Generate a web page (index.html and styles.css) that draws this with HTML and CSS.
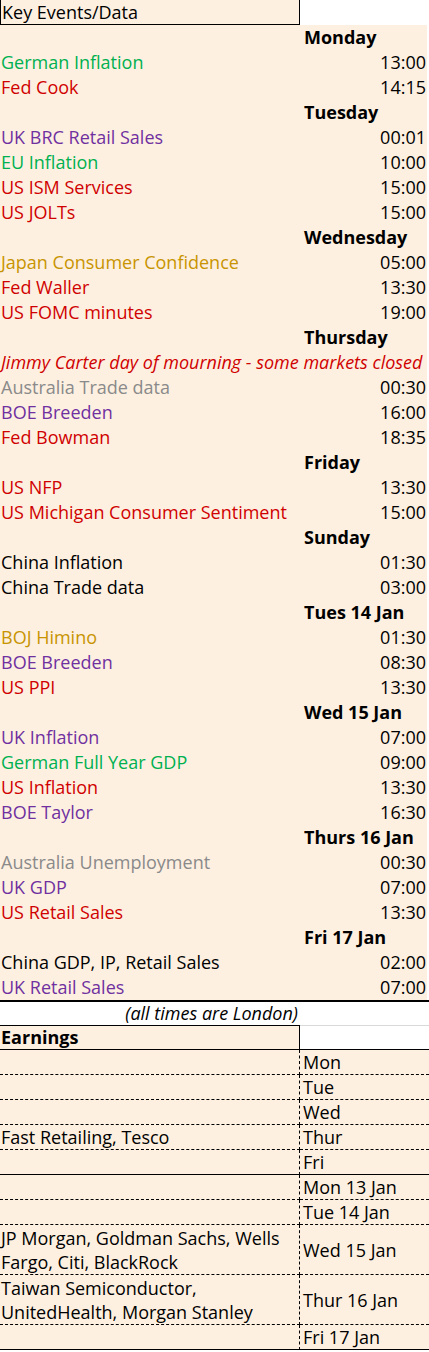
FILE: index.html
```html
<!DOCTYPE html>
<html>
<head>
<meta charset="utf-8">
<link rel="stylesheet" href="styles.css">
</head>
<body>
<div class="sheet">
  <div class="events">
    <div class="title">Key Events/Data</div><div class="blank"></div>

    <div class="ev"></div><div class="day">Monday</div>
    <div class="ev green">German Inflation</div><div class="time">13:00</div>
    <div class="ev red">Fed Cook</div><div class="time">14:15</div>

    <div class="ev"></div><div class="day">Tuesday</div>
    <div class="ev purple">UK BRC Retail Sales</div><div class="time">00:01</div>
    <div class="ev green">EU Inflation</div><div class="time">10:00</div>
    <div class="ev red">US ISM Services</div><div class="time">15:00</div>
    <div class="ev red">US JOLTs</div><div class="time">15:00</div>

    <div class="ev"></div><div class="day">Wednesday</div>
    <div class="ev gold">Japan Consumer Confidence</div><div class="time">05:00</div>
    <div class="ev red">Fed Waller</div><div class="time">13:30</div>
    <div class="ev red">US FOMC minutes</div><div class="time">19:00</div>

    <div class="ev"></div><div class="day">Thursday</div>
    <div class="note">Jimmy Carter day of mourning - some markets closed</div>
    <div class="ev gray">Australia Trade data</div><div class="time">00:30</div>
    <div class="ev purple">BOE Breeden</div><div class="time">16:00</div>
    <div class="ev red">Fed Bowman</div><div class="time">18:35</div>

    <div class="ev"></div><div class="day">Friday</div>
    <div class="ev red">US NFP</div><div class="time">13:30</div>
    <div class="ev red">US Michigan Consumer Sentiment</div><div class="time">15:00</div>

    <div class="ev"></div><div class="day">Sunday</div>
    <div class="ev">China Inflation</div><div class="time">01:30</div>
    <div class="ev">China Trade data</div><div class="time">03:00</div>

    <div class="ev"></div><div class="day">Tues 14 Jan</div>
    <div class="ev gold">BOJ Himino</div><div class="time">01:30</div>
    <div class="ev purple">BOE Breeden</div><div class="time">08:30</div>
    <div class="ev red">US PPI</div><div class="time">13:30</div>

    <div class="ev"></div><div class="day">Wed 15 Jan</div>
    <div class="ev purple">UK Inflation</div><div class="time">07:00</div>
    <div class="ev green">German Full Year GDP</div><div class="time">09:00</div>
    <div class="ev red">US Inflation</div><div class="time">13:30</div>
    <div class="ev purple">BOE Taylor</div><div class="time">16:30</div>

    <div class="ev"></div><div class="day">Thurs 16 Jan</div>
    <div class="ev gray">Australia Unemployment</div><div class="time">00:30</div>
    <div class="ev purple">UK GDP</div><div class="time">07:00</div>
    <div class="ev red">US Retail Sales</div><div class="time">13:30</div>

    <div class="ev"></div><div class="day">Fri 17 Jan</div>
    <div class="ev">China GDP, IP, Retail Sales</div><div class="time">02:00</div>
    <div class="ev purple">UK Retail Sales</div><div class="time">07:00</div>
  </div>

  <div class="london">
    <div class="london-text">(all times are London)</div>
  </div>

  <div class="earn-head">
    <div class="earn-title">Earnings</div><div class="earn-blank"></div>
  </div>

  <div class="earnings">
    <div class="co"></div><div class="date">Mon</div>
    <div class="co"></div><div class="date">Tue</div>
    <div class="co"></div><div class="date">Wed</div>
    <div class="co">Fast Retailing, Tesco</div><div class="date">Thur</div>
    <div class="co week-end"></div><div class="date week-end">Fri</div>
    <div class="co"></div><div class="date">Mon 13 Jan</div>
    <div class="co"></div><div class="date">Tue 14 Jan</div>
    <div class="co two">JP Morgan, Goldman Sachs, Wells Fargo, Citi, BlackRock</div><div class="date">Wed 15 Jan</div>
    <div class="co two">Taiwan Semiconductor, UnitedHealth, Morgan Stanley</div><div class="date">Thur 16 Jan</div>
    <div class="co week-end"></div><div class="date week-end">Fri 17 Jan</div>
  </div>
</div>
</body>
</html>
```

FILE: styles.css
```css
html, body {
  margin: 0;
  padding: 0;
  background: #ffffff;
}

body {
  font-family: "Open Sans", "Noto Sans", sans-serif;
  font-size: 18px;
  color: #000000;
}

.sheet {
  width: 429px;
}

.events {
  display: grid;
  grid-template-columns: 300px 127px;
  grid-auto-rows: 25px;
  background: linear-gradient(#fdf0e1, #fdf0e1) no-repeat 0 25px / 427px 100%;
}

.title {
  box-sizing: border-box;
  background: #fdf0e1;
  border-left: 1px solid #000;
  border-right: 1px solid #000;
  border-bottom: 1px solid #000;
  height: 25px;
  line-height: 24px;
  padding-left: 1px;
  white-space: nowrap;
}

.blank {
  background: #ffffff;
}

.ev {
  line-height: 25px;
  padding-left: 1px;
  white-space: nowrap;
}

.time {
  line-height: 25px;
  text-align: right;
  padding-right: 1px;
}

.day {
  line-height: 25px;
  font-weight: 700;
  padding-left: 4px;
  white-space: nowrap;
}

.note {
  grid-column: 1 / 3;
  line-height: 25px;
  font-style: italic;
  color: #d00000;
  padding-left: 1px;
  white-space: nowrap;
}

.green { color: #00b050; }
.red { color: #d00000; }
.purple { color: #7030a0; }
.gold { color: #c89400; }
.gray { color: #8a8a8a; }

.london {
  border-top: 2px solid #000;
  display: grid;
  grid-template-columns: 300px 129px;
  height: 23px;
}

.london-text {
  font-style: italic;
  text-align: right;
  line-height: 23px;
  padding-right: 2px;
  white-space: nowrap;
}

.earn-head {
  display: grid;
  grid-template-columns: 300px 129px;
  height: 25px;
}

.earn-title {
  box-sizing: border-box;
  background: #fdf0e1;
  border-top: 1px solid #000;
  border-right: 1px solid #000;
  border-bottom: 1px solid #000;
  font-weight: 700;
  line-height: 23px;
  padding-left: 1px;
}

.earn-blank {
  box-sizing: border-box;
  border-top: 1px solid #d9d9d9;
  border-bottom: 1px solid #000;
}

.earnings {
  display: grid;
  grid-template-columns: 300px 129px;
  background: #fdf0e1;
}

.co, .date {
  box-sizing: border-box;
  border-bottom: 1px dashed #000;
  min-height: 25px;
  display: flex;
  align-items: center;
  line-height: 24px;
}

.co {
  padding-left: 1px;
  border-right: 1px dashed #000;
}

.date {
  padding-left: 3px;
  white-space: nowrap;
}

.co.two {
  height: 50px;
}

.co.week-end, .date.week-end {
  border-bottom: 1px solid #000;
}
```
